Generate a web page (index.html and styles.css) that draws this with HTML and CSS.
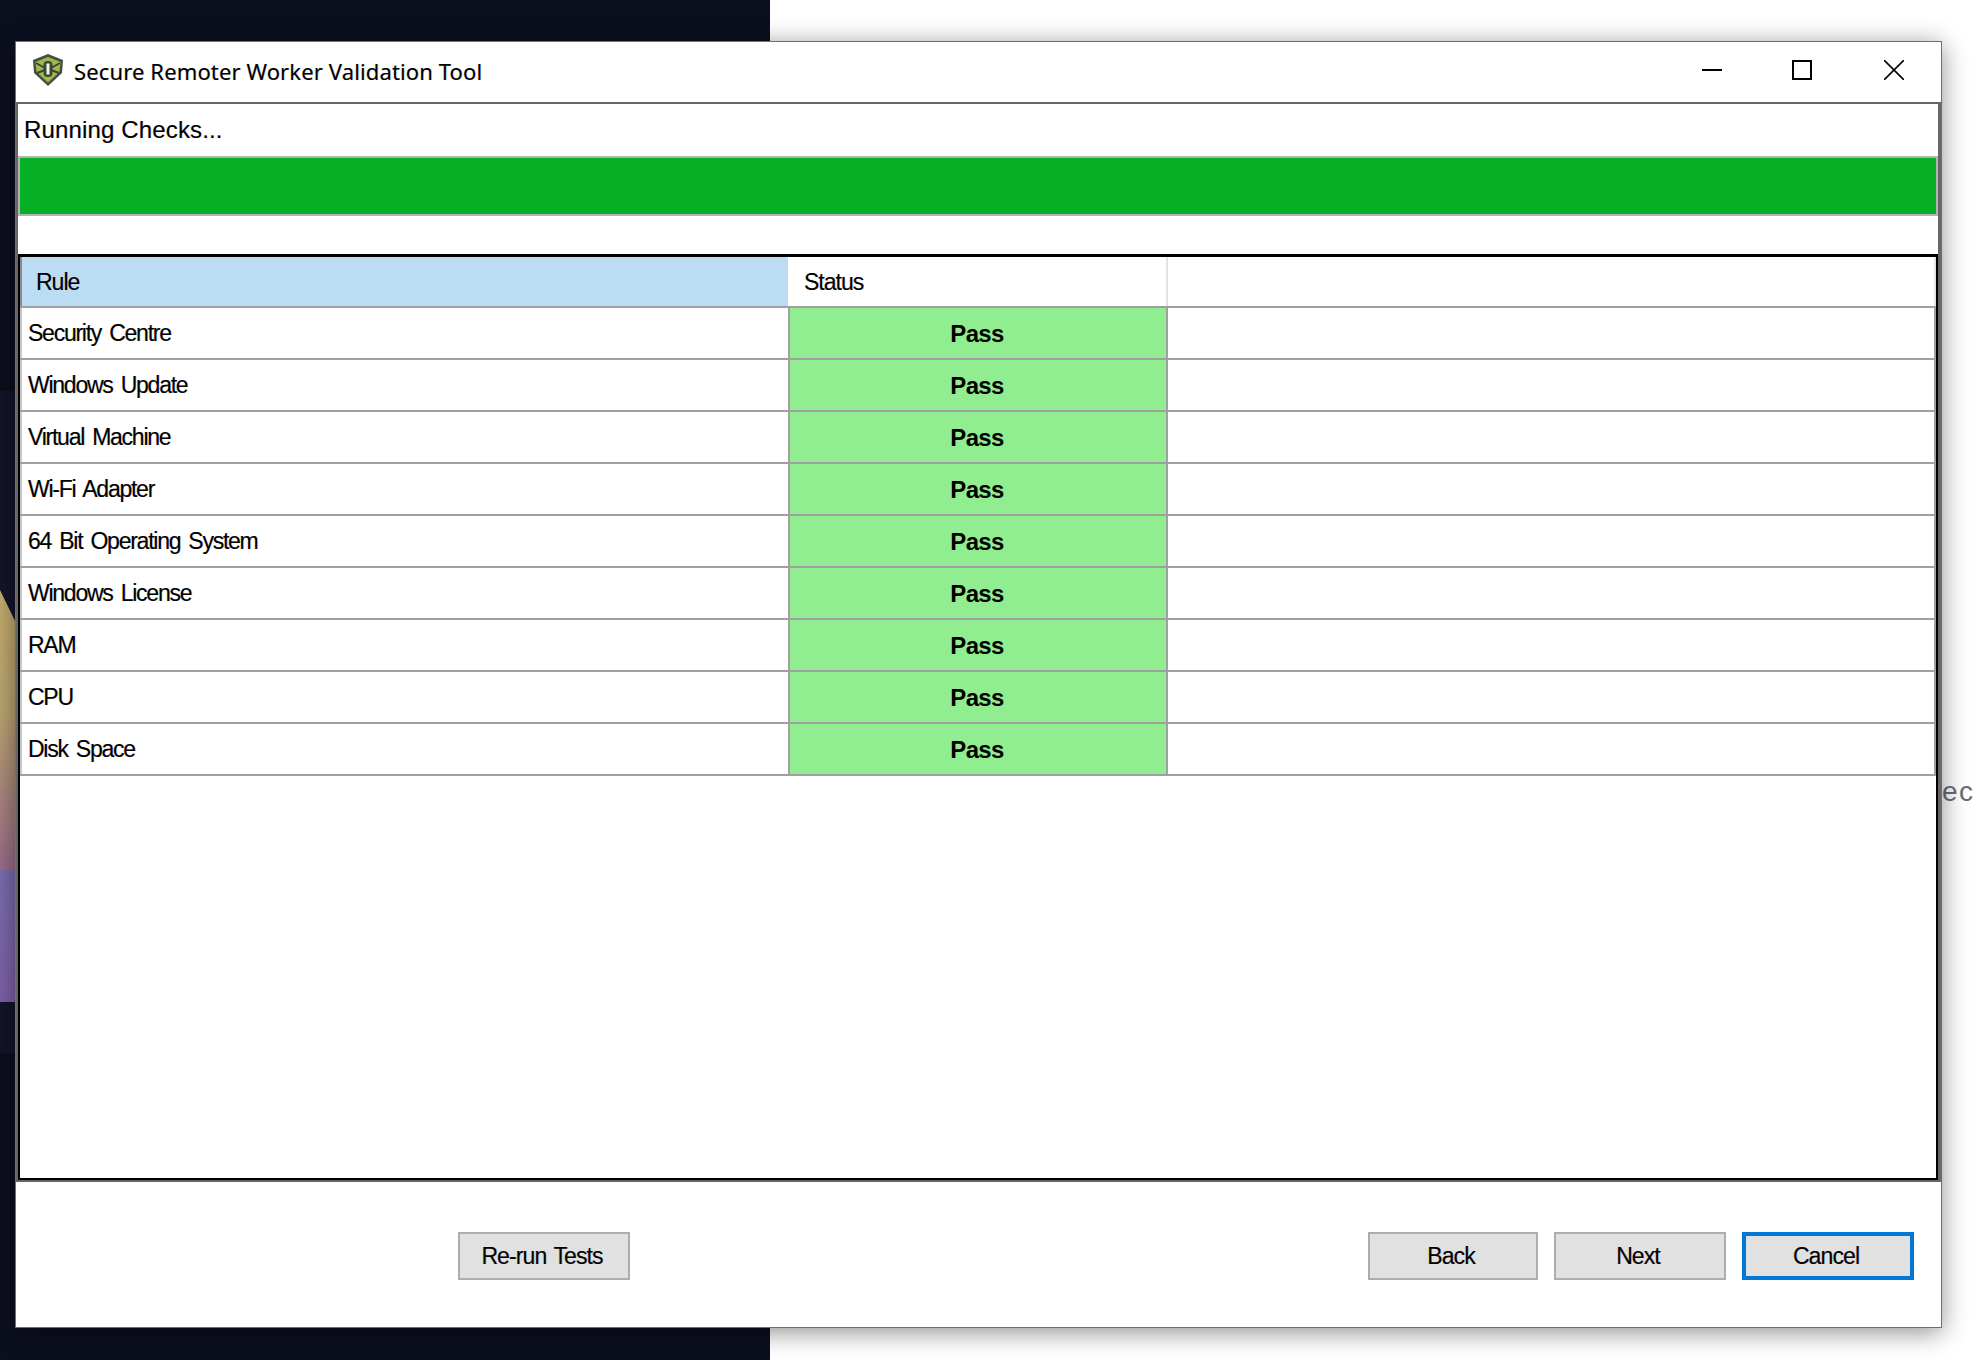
FILE: index.html
```html
<!DOCTYPE html>
<html lang="en">
<head>
<meta charset="utf-8">
<title>Secure Remoter Worker Validation Tool</title>
<link rel="stylesheet" href="styles.css">
</head>
<body>
<div class="desktop">
  <div class="dark-side"><div class="dusk"></div><div class="wallpaper"></div></div>
  <div class="peek">ec</div>
  <div class="window">
    <header class="titlebar">
      <svg class="app-icon" viewBox="0 0 32 32" aria-hidden="true">
        <path d="M16 0 31 6 30 19 16 32 2 19 1 6z" fill="#484d44"/>
        <path d="M16 3 28.500 8 27.500 18 16 28.500 4.500 18 3.500 8z" fill="#9dbb4b"/>
        <path d="M4 9l9 5M28 9l-9 5M5 19l8-3M27 19l-8-3" stroke="#3d4438" stroke-width="2"/>
        <rect x="11.500" y="7" width="9" height="16" rx="4" fill="#3d4438"/>
        <rect x="14.500" y="9.500" width="3" height="11" fill="#f2f5e6"/>
      </svg>
      <span class="title">Secure Remoter Worker Validation Tool</span>
      <div class="controls">
        <svg class="ctl" viewBox="0 0 20 20" aria-hidden="true"><path d="M0 10h20" stroke="#000" stroke-width="2"/></svg>
        <svg class="ctl ctl-max" viewBox="0 0 20 20" aria-hidden="true"><rect x="1" y="1" width="18" height="18" fill="none" stroke="#000" stroke-width="2"/></svg>
        <svg class="ctl" viewBox="0 0 20 20" aria-hidden="true"><path d="M0 0 20 20M20 0 0 20" stroke="#000" stroke-width="1.600"/></svg>
      </div>
    </header>
    <main class="panel">
      <div class="status-line">Running Checks...</div>
      <div class="progress"><div class="progress-fill"></div></div>
      <div class="spacer"></div>
      <section class="table">
        <div class="row head">
          <div class="cell rule selected">Rule</div>
          <div class="cell status">Status</div>
          <div class="cell rest"></div>
        </div>
        <div class="row"><div class="cell rule">Security Centre</div><div class="cell status pass">Pass</div><div class="cell rest"></div></div>
        <div class="row"><div class="cell rule">Windows Update</div><div class="cell status pass">Pass</div><div class="cell rest"></div></div>
        <div class="row"><div class="cell rule">Virtual Machine</div><div class="cell status pass">Pass</div><div class="cell rest"></div></div>
        <div class="row"><div class="cell rule">Wi-Fi Adapter</div><div class="cell status pass">Pass</div><div class="cell rest"></div></div>
        <div class="row"><div class="cell rule">64 Bit Operating System</div><div class="cell status pass">Pass</div><div class="cell rest"></div></div>
        <div class="row"><div class="cell rule">Windows License</div><div class="cell status pass">Pass</div><div class="cell rest"></div></div>
        <div class="row"><div class="cell rule">RAM</div><div class="cell status pass">Pass</div><div class="cell rest"></div></div>
        <div class="row"><div class="cell rule">CPU</div><div class="cell status pass">Pass</div><div class="cell rest"></div></div>
        <div class="row"><div class="cell rule">Disk Space</div><div class="cell status pass">Pass</div><div class="cell rest"></div></div>
      </section>
    </main>
    <footer class="footer">
      <button class="btn rerun">Re-run Tests</button>
      <button class="btn back">Back</button>
      <button class="btn next">Next</button>
      <button class="btn cancel">Cancel</button>
    </footer>
  </div>
</div>
</body>
</html>
```
FILE: styles.css
```css
* { box-sizing: border-box; }
html, body { margin: 0; padding: 0; background: #fff; }
.desktop { position: relative; width: 1976px; height: 1360px; overflow: hidden; background: #fff; font-family: "Liberation Sans", Arial, sans-serif; color: #000; }
.dark-side { position: absolute; left: 0; top: 0; width: 770px; height: 1360px; background: #0c0f1e; }
.dusk { position: absolute; left: 0; top: 391px; width: 15px; height: 662px; background: #15142a; }
.wallpaper { position: absolute; left: 0; top: 590px; width: 15px; height: 412px; background: linear-gradient(#c4ae6c 0, #bda573 30%, #9a6c8a 68%, #7a6eb0 68%, #7f62a8 100%); clip-path: polygon(0 0, 100% 31px, 100% 100%, 0 100%); }
.peek { position: absolute; left: 1942px; top: 776px; font-size: 28px; letter-spacing: 1.500px; color: #696c7b; line-height: 32px; white-space: nowrap; }
.window { position: absolute; left: 15px; top: 41px; width: 1927px; height: 1287px; background: #fff; border: 1px solid #707070; display: flex; flex-direction: column; box-shadow: 0 4px 24px rgba(0, 0, 0, .45); }
.titlebar { height: 60px; flex: none; display: flex; align-items: center; padding: 0 0 4px 16px; background: #fff; }
.app-icon { width: 32px; height: 32px; flex: none; }
.title { margin: 2px 0 0 10px; font-family: "Noto Sans", sans-serif; font-size: 22px; letter-spacing: .13px; white-space: nowrap; text-shadow: -.5px 0 rgba(255, 150, 0, .35), .5px 0 rgba(0, 110, 255, .35); }
.controls { margin-left: auto; display: flex; align-items: center; padding-right: 37px; gap: 70px; }
.ctl { width: 20px; height: 20px; display: block; }
.ctl-max { margin-right: 2px; }
.panel { height: 1080px; flex: none; border: 2px solid #666; border-right-width: 3px; display: flex; flex-direction: column; background: #fff; }
.status-line { height: 52px; flex: none; padding-left: 6px; font-size: 24px; letter-spacing: .15px; line-height: 52px; text-shadow: -.5px 0 rgba(255, 150, 0, .35), .5px 0 rgba(0, 110, 255, .35); }
.progress { height: 60px; flex: none; border: 2px solid #b4b4b4; background: #e6e6e6; }
.progress-fill { height: 100%; background: #06b025; }
.spacer { height: 38px; flex: none; }
.table { flex: 1; border: 2px solid #000; border-top-width: 3px; background: #fff; display: flex; flex-direction: column; }
.row { display: grid; grid-template-columns: 768px 378px 1fr; height: 52px; flex: none; border-bottom: 2px solid #a0a0a0; }
.cell { display: flex; align-items: center; padding-top: 1px; font-size: 23px; letter-spacing: -1.250px; word-spacing: 3px; text-shadow: -.5px 0 rgba(255, 150, 0, .35), .5px 0 rgba(0, 110, 255, .35); white-space: nowrap; }
.rule { padding-left: 6px; border-left: 2px solid #c8c8c8; }
.status { border-left: 2px solid #a0a0a0; }
.rest { border-left: 2px solid #a0a0a0; border-right: 2px solid #a0a0a0; }
.pass { background: #90ee90; justify-content: center; padding-right: 2px; font-size: 24px; font-weight: 700; letter-spacing: -.7px; text-shadow: none; }
.head { height: 51px; }
.head .rule { padding-left: 14px; border-left-color: #8a8a8a; letter-spacing: -1px; }
.head .selected { background: #bcdcf4; }
.head .status { padding-left: 16px; border-left: 0; letter-spacing: -1px; }
.head .rest { border-left-color: #e3e3e3; border-right-color: #e3e3e3; }
.footer { flex: 1; position: relative; background: #fff; }
.btn { position: absolute; top: 50px; height: 48px; background: #e1e1e1; border: 2px solid #adadad; border-radius: 0; padding: 0 4px 0 0; font-family: "Liberation Sans", Arial, sans-serif; font-size: 23px; letter-spacing: -.9px; word-spacing: 2px; color: #000; text-shadow: -.5px 0 rgba(255, 150, 0, .35), .5px 0 rgba(0, 110, 255, .35); }
.rerun { left: 442px; width: 172px; }
.back { left: 1352px; width: 170px; }
.next { left: 1538px; width: 172px; }
.cancel { left: 1726px; width: 172px; border: 4px solid #0078d7; }
```
